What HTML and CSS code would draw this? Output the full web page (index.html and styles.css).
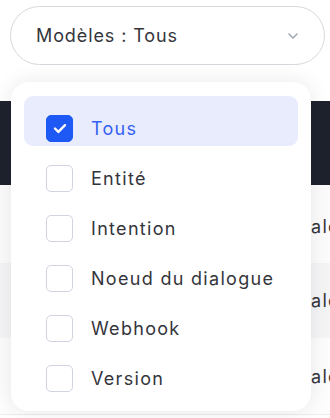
FILE: index.html
```html
<!DOCTYPE html>
<html lang="fr">
<head>
<meta charset="utf-8">
<link rel="stylesheet" href="styles.css">
</head>
<body>
<div class="page">
  <div class="top">
    <div class="trigger">
      <span class="trigger-label">Modèles : Tous</span>
      <svg class="chev" width="10" height="6" viewBox="0 0 10 6"><path d="M1 1l4 4 4-4" fill="none" stroke="#a3a8b5" stroke-width="1.6" stroke-linecap="round" stroke-linejoin="round"/></svg>
    </div>
  </div>
  <div class="table">
    <div class="band"></div>
    <div class="row r1"><span class="cell">ale</span></div>
    <div class="row r2"><span class="cell">ale</span></div>
    <div class="row r3"><span class="cell">ale</span></div>
  </div>

  <div class="menu">
    <div class="item active">
      <span class="box checked"><svg width="14" height="11" viewBox="0 0 14 11"><path d="M2 5.5l3.4 3.4L12 2.2" fill="none" stroke="#fff" stroke-width="2.4" stroke-linecap="round" stroke-linejoin="round"/></svg></span>
      <span class="label">Tous</span>
    </div>
    <div class="item"><span class="box"></span><span class="label">Entité</span></div>
    <div class="item"><span class="box"></span><span class="label">Intention</span></div>
    <div class="item"><span class="box"></span><span class="label">Noeud du dialogue</span></div>
    <div class="item"><span class="box"></span><span class="label">Webhook</span></div>
    <div class="item"><span class="box"></span><span class="label">Version</span></div>
  </div>
</div>
</body>
</html>
```

FILE: styles.css
```css
* { box-sizing: border-box; }
html, body { margin: 0; padding: 0; background: #fff; }
body {
  font-family: Inter, "Noto Sans", sans-serif;
  color: #33343a;
  width: 330px;
  height: 418px;
  overflow: hidden;
}
.page { position: relative; width: 330px; height: 418px; }
.top { padding: 6px 5px 0 10px; height: 101px; }
.trigger {
  height: 59px;
  border: 1px solid #d6d8de;
  border-radius: 30px;
  display: flex;
  align-items: center;
  justify-content: space-between;
  padding: 0 26px 0 25px;
}
.trigger-label { font-size: 18px; color: #34353b; letter-spacing: 0.9px; }
.chev { margin-top: 1px; }
.table { display: flex; flex-direction: column; }
.band { height: 84px; background: #1e222d; }
.row {
  display: flex;
  align-items: center;
  padding-left: 311px;
  overflow: hidden;
  white-space: nowrap;
  font-size: 18px;
  letter-spacing: 1.3px;
  color: #34353b;
}
.r1 { height: 78px; background: #fcfcfc; padding-top: 4px; }
.r2 { height: 75px; background: #f5f5f6; }
.r3 { height: 77px; background: #fdfdfd; border-bottom: 1px solid #ececee; }
.menu {
  position: absolute;
  left: 11px;
  top: 82px;
  width: 300px;
  height: 329px;
  background: #fff;
  border-radius: 18px;
  box-shadow: 0 0 22px rgba(20, 24, 40, 0.09);
  padding: 14px 13px;
  display: flex;
  flex-direction: column;
}
.item {
  height: 50px;
  display: flex;
  align-items: center;
  padding: 14px 0 0 22px;
  gap: 18px;
  border-radius: 9px;
  flex-shrink: 0;
}
.item.active { background: #e8ecfd; }
.box {
  width: 27px;
  height: 27px;
  border: 1px solid #d0d4e2;
  border-radius: 5px;
  background: #fff;
  display: flex;
  align-items: center;
  justify-content: center;
  flex-shrink: 0;
}
.box.checked { background: #1f59f5; border-color: #1f59f5; }
.label { font-size: 18px; color: #34353b; letter-spacing: 1.3px; }
.item.active .label { color: #3461f2; }
```
